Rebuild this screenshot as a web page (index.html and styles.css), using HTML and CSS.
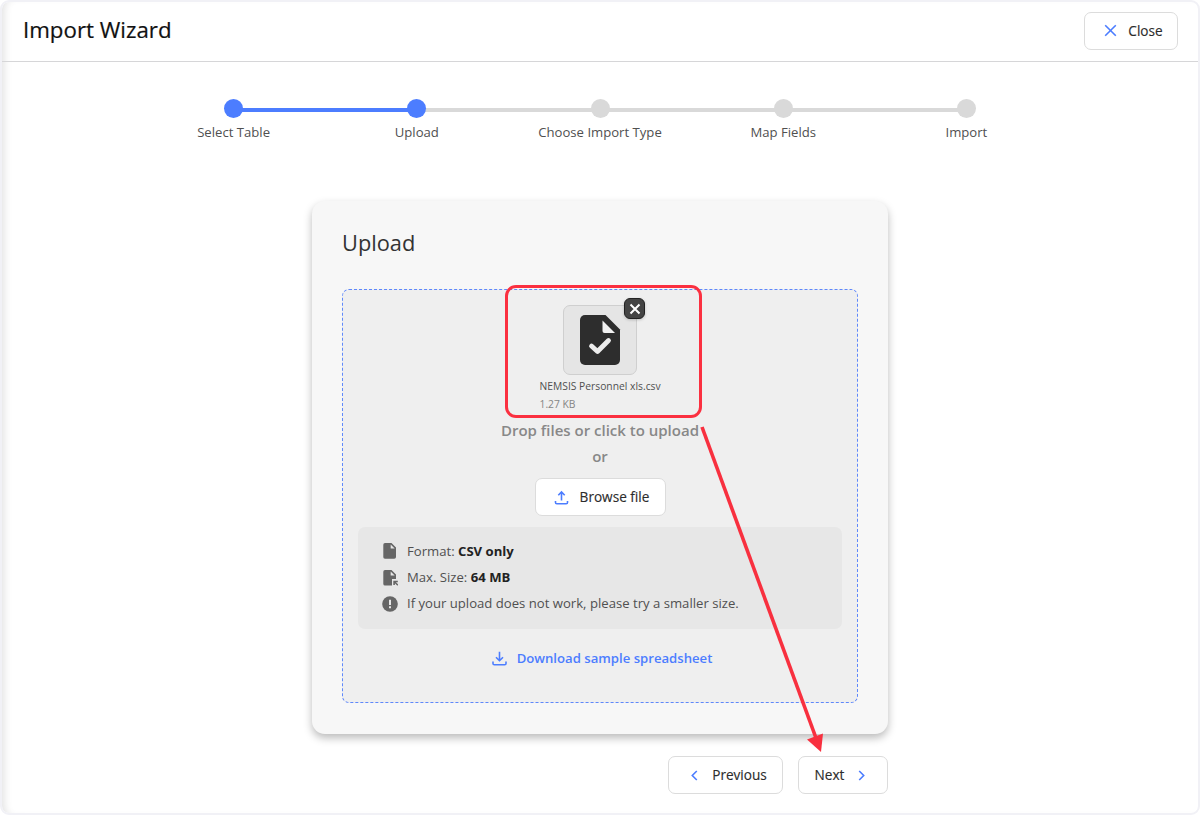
FILE: index.html
```html
<!DOCTYPE html>
<html lang="en">
<head>
    <meta charset="UTF-8">
    <meta name="viewport" content="width=device-width, initial-scale=1.0">
    <title>Import Wizard</title>

    <link rel="stylesheet" href="styles.css">
</head>
<body>
    <div class="wizard">
        <header class="header">
            <h1>Import Wizard</h1>
            <button type="button" class="btn btn-close">
                <svg width="13" height="13" viewBox="0 0 13 13"><path d="M1.2 1.2l10.6 10.6M11.8 1.2L1.2 11.8"/></svg>
                <span>Close</span>
            </button>
        </header>

        <ol class="steps">
            <li class="done"><i></i><span>Select Table</span></li>
            <li class="current"><i></i><span>Upload</span></li>
            <li><i></i><span>Choose Import Type</span></li>
            <li><i></i><span>Map Fields</span></li>
            <li><i></i><span>Import</span></li>
        </ol>

        <main class="content">
            <section class="card">
                <h2>Upload</h2>
                <div class="dropzone">
                    <div class="file">
                        <div class="thumb">
                            <svg width="42" height="52" viewBox="0 0 42 52">
                                <path fill="#2d2d2d" d="M6 1h20.500L41 15.500V46a5 5 0 0 1-5 5H6a5 5 0 0 1-5-5V6a5 5 0 0 1 5-5z"/>
                                <path fill="#f0f0f0" d="M23.500 6.500L36 19H25.500a2 2 0 0 1-2-2z"/>
                                <path fill="none" stroke="#ececec" stroke-width="4.800" stroke-linecap="round" stroke-linejoin="round" d="M12.500 32l6 5.500L29.500 26.500"/>
                            </svg>
                            <button type="button" class="remove">
                                <svg width="12" height="12" viewBox="0 0 12 12"><path d="M1.500 1.500l9 9M10.500 1.500l-9 9"/></svg>
                            </button>
                        </div>
                        <p class="file-name">NEMSIS Personnel xls.csv</p>
                        <p class="file-size">1.27 KB</p>
                        <div class="highlight"></div>
                    </div>

                    <p class="hint">Drop files or click to upload</p>
                    <p class="hint">or</p>

                    <button type="button" class="btn btn-browse">
                        <svg width="15" height="15" viewBox="0 0 15 15"><path d="M7.500 10.500V2M4.300 5.200l3.200-3.200 3.200 3.200M1.500 11v1.500a1.300 1.300 0 0 0 1.300 1.300h9.400a1.300 1.300 0 0 0 1.300-1.300V11"/></svg>
                        <span>Browse file</span>
                    </button>

                    <ul class="rules">
                        <li>
                            <svg width="16" height="16" viewBox="0 0 16 16">
                                <path d="M3 0h6.500L14 4.500V14a1.800 1.800 0 0 1-1.800 1.800H3A1.700 1.700 0 0 1 1.300 14V1.700A1.700 1.700 0 0 1 3 0z"/>
                                <path class="cut" d="M8.700 1.500L12.700 5.500h-4z"/>
                            </svg>
                            <span>Format: <b>CSV only</b></span>
                        </li>
                        <li>
                            <svg width="16" height="16" viewBox="0 0 16 16">
                                <path d="M3 0h6.500L14 4.500V9H10v6.500H3A1.700 1.700 0 0 1 1.300 14V1.700A1.700 1.700 0 0 1 3 0z"/>
                                <path class="cut" d="M8.700 1.500L12.700 5.500h-4z"/>
                                <path d="M11.300 10.700h4.500v1.500h-1.900l2.500 2.500-1 1-2.500-2.500v1.900h-1.600z"/>
                            </svg>
                            <span>Max. Size: <b>64 MB</b></span>
                        </li>
                        <li>
                            <svg width="16" height="16" viewBox="0 0 16 16">
                                <circle cx="8" cy="8" r="7.800"/>
                                <path class="cut" d="M7 3.800h2v5.200H7zM7 10.300h2v2H7z"/>
                            </svg>
                            <span>If your upload does not work, please try a smaller size.</span>
                        </li>
                    </ul>

                    <a class="download">
                        <svg width="15" height="15" viewBox="0 0 15 15"><path d="M7.500 .8v8.500M4 6.200l3.500 3.500L11 6.200M1 10.500v2a1.300 1.300 0 0 0 1.300 1.300h10.400a1.300 1.300 0 0 0 1.300-1.300v-2"/></svg>
                        <span>Download sample spreadsheet</span>
                    </a>
                </div>
            </section>

            <div class="actions">
                <button type="button" class="btn btn-prev">
                    <svg width="7" height="11" viewBox="0 0 7 11"><path d="M5.800 1L1.300 5.500 5.800 10"/></svg>
                    <span>Previous</span>
                </button>
                <button type="button" class="btn btn-next">
                    <span>Next</span>
                    <svg width="7" height="11" viewBox="0 0 7 11"><path d="M1.200 1l4.500 4.500L1.200 10"/></svg>
                </button>
            </div>
        </main>

        <svg class="arrow" width="126" height="328" viewBox="0 0 126 328">
            <path d="M3 2L117 313" stroke="#f8303f" stroke-width="3.600"/>
            <path d="M108 314.500L124 308.500L122 327z" fill="#f8303f"/>
        </svg>
    </div>
</body>
</html>
```

FILE: styles.css
```css
* {
    box-sizing: border-box;
}

body {
    margin: 0;
    background: #fff;
    font-family: "Open Sans", "Noto Sans", sans-serif;
    font-size: 13.13px;
    color: #505050;
}

h1, h2, p, ol, ul {
    margin: 0;
    padding: 0;
    list-style: none;
}

svg {
    display: block;
    flex: none;
}

.wizard {
    position: relative;
    height: 815px;
    border: 2px solid #f1f1f6;
    border-radius: 9px;
    box-shadow: inset 8px 0 8px -6px rgba(0, 0, 0, 0.12);
    overflow: hidden;
}

.header {
    display: flex;
    justify-content: space-between;
    align-items: center;
    height: 60px;
    padding: 0 20px 2px 21px;
    border-bottom: 1px solid #d6d6d8;
}

h1 {
    padding-bottom: 1px;
    font-size: 22.3px;
    font-weight: 500;
    line-height: 30px;
    color: #111;
    -webkit-text-stroke: 0.2px #111;
}

.btn {
    display: flex;
    align-items: center;
    justify-content: center;
    height: 38px;
    padding: 0;
    border: 1px solid #dcdcdc;
    border-radius: 7px;
    background: #fff;
    font: 500 13.6px "Open Sans", sans-serif;
    color: #2c2c2c;
}

.btn span {
    padding-bottom: 1px;
    -webkit-text-stroke: 0.15px #2c2c2c;
}

.btn path,
.download path {
    fill: none;
    stroke: #4c7dff;
    stroke-width: 1.6;
}

.btn-close {
    width: 94px;
    padding-left: 5px;
    gap: 11px;
}

.steps {
    display: flex;
    width: 916px;
    margin: 37px 0 0 140px;
}

.steps li {
    position: relative;
    flex: 1;
    display: flex;
    flex-direction: column;
    align-items: center;
}

.steps i {
    position: relative;
    z-index: 1;
    width: 19px;
    height: 19px;
    border-radius: 50%;
    background: #d9d9d9;
}

.steps li:not(:last-child)::after {
    content: "";
    position: absolute;
    top: 9px;
    left: 50%;
    width: 100%;
    height: 4px;
    background: #d9d9d9;
}

.steps li.done i,
.steps li.current i,
.steps li.done::after {
    background: #4c7dff !important;
}

.steps span {
    margin-top: 4px;
    line-height: 20px;
}

.content {
    width: 576px;
    margin: 59px auto 0;
}

.card {
    height: 533px;
    padding: 26px 30px 0;
    border-radius: 13px;
    background: #f7f7f7;
    box-shadow: 0 4px 9px rgba(0, 0, 0, 0.27);
}

h2 {
    font-size: 21.8px;
    font-weight: 400;
    line-height: 32px;
    color: #333;
}

.dropzone {
    display: flex;
    flex-direction: column;
    align-items: center;
    height: 414px;
    margin-top: 30px;
    padding: 15px 15px 0;
    border: 1px dashed #5f88fb;
    border-radius: 7px;
    background: #efefef;
}

.file {
    position: relative;
    width: 121px;
    white-space: nowrap;
}

.thumb {
    position: relative;
    display: flex;
    align-items: center;
    justify-content: center;
    width: 74px;
    height: 70px;
    margin: 0 auto;
    border: 1px solid #cfcfcf;
    border-radius: 7px;
    background: #e5e5e5;
}

.remove {
    position: absolute;
    top: -8px;
    right: -9px;
    display: flex;
    align-items: center;
    justify-content: center;
    width: 21px;
    height: 21px;
    padding: 0;
    border: 1px solid #222;
    border-radius: 6px;
    background: #444;
    box-shadow: 0 1px 3px rgba(0, 0, 0, 0.2);
}

.remove path {
    stroke: #fff;
    stroke-width: 2;
}

.file-name {
    margin-top: 2px;
    font-size: 10.3px;
    line-height: 18px;
}

.file-size {
    font-size: 10.3px;
    line-height: 18px;
    color: #858585;
}

.highlight {
    position: absolute;
    top: -20px;
    left: -35px;
    width: 197px;
    height: 133px;
    border: 3px solid #fb3040;
    border-radius: 11px;
}

.hint {
    font-size: 15px;
    font-weight: 600;
    line-height: 25px;
    color: #888;
}

.file + .hint {
    margin-top: 5px;
}

.hint + .hint {
    margin-top: 1px;
}

.btn-browse {
    width: 131px;
    margin-top: 9px;
    padding-left: 3px;
    gap: 11px;
}

.rules {
    display: flex;
    flex-direction: column;
    width: 484px;
    height: 102px;
    margin-top: 11px;
    padding: 11px 24px;
    border-radius: 7px;
    background: #e7e7e7;
}

.rules li {
    display: flex;
    align-items: center;
    gap: 9px;
    height: 26.4px;
    white-space: nowrap;
}

.rules li span {
    padding-bottom: 1px;
}

.rules svg {
    fill: #666;
}

.rules .cut {
    fill: #e7e7e7;
}

.rules b {
    font-weight: 700;
    color: #222;
}

.download {
    display: flex;
    align-items: center;
    gap: 10px;
    margin: 19px 0 0 4px;
    font-size: 13.15px;
    font-weight: 600;
    line-height: 20px;
    color: #4c7dff;
}

.actions {
    display: flex;
    justify-content: flex-end;
    gap: 15px;
    margin-top: 22px;
}

.btn-prev {
    width: 115px;
    padding-left: 7px;
    gap: 14px;
}

.btn-next {
    width: 90px;
    padding-right: 6px;
    gap: 14px;
}

/* callout pointing at the Next button */
.arrow {
    position: absolute;
    top: 423px;
    left: 697px;
    pointer-events: none;
}
```
